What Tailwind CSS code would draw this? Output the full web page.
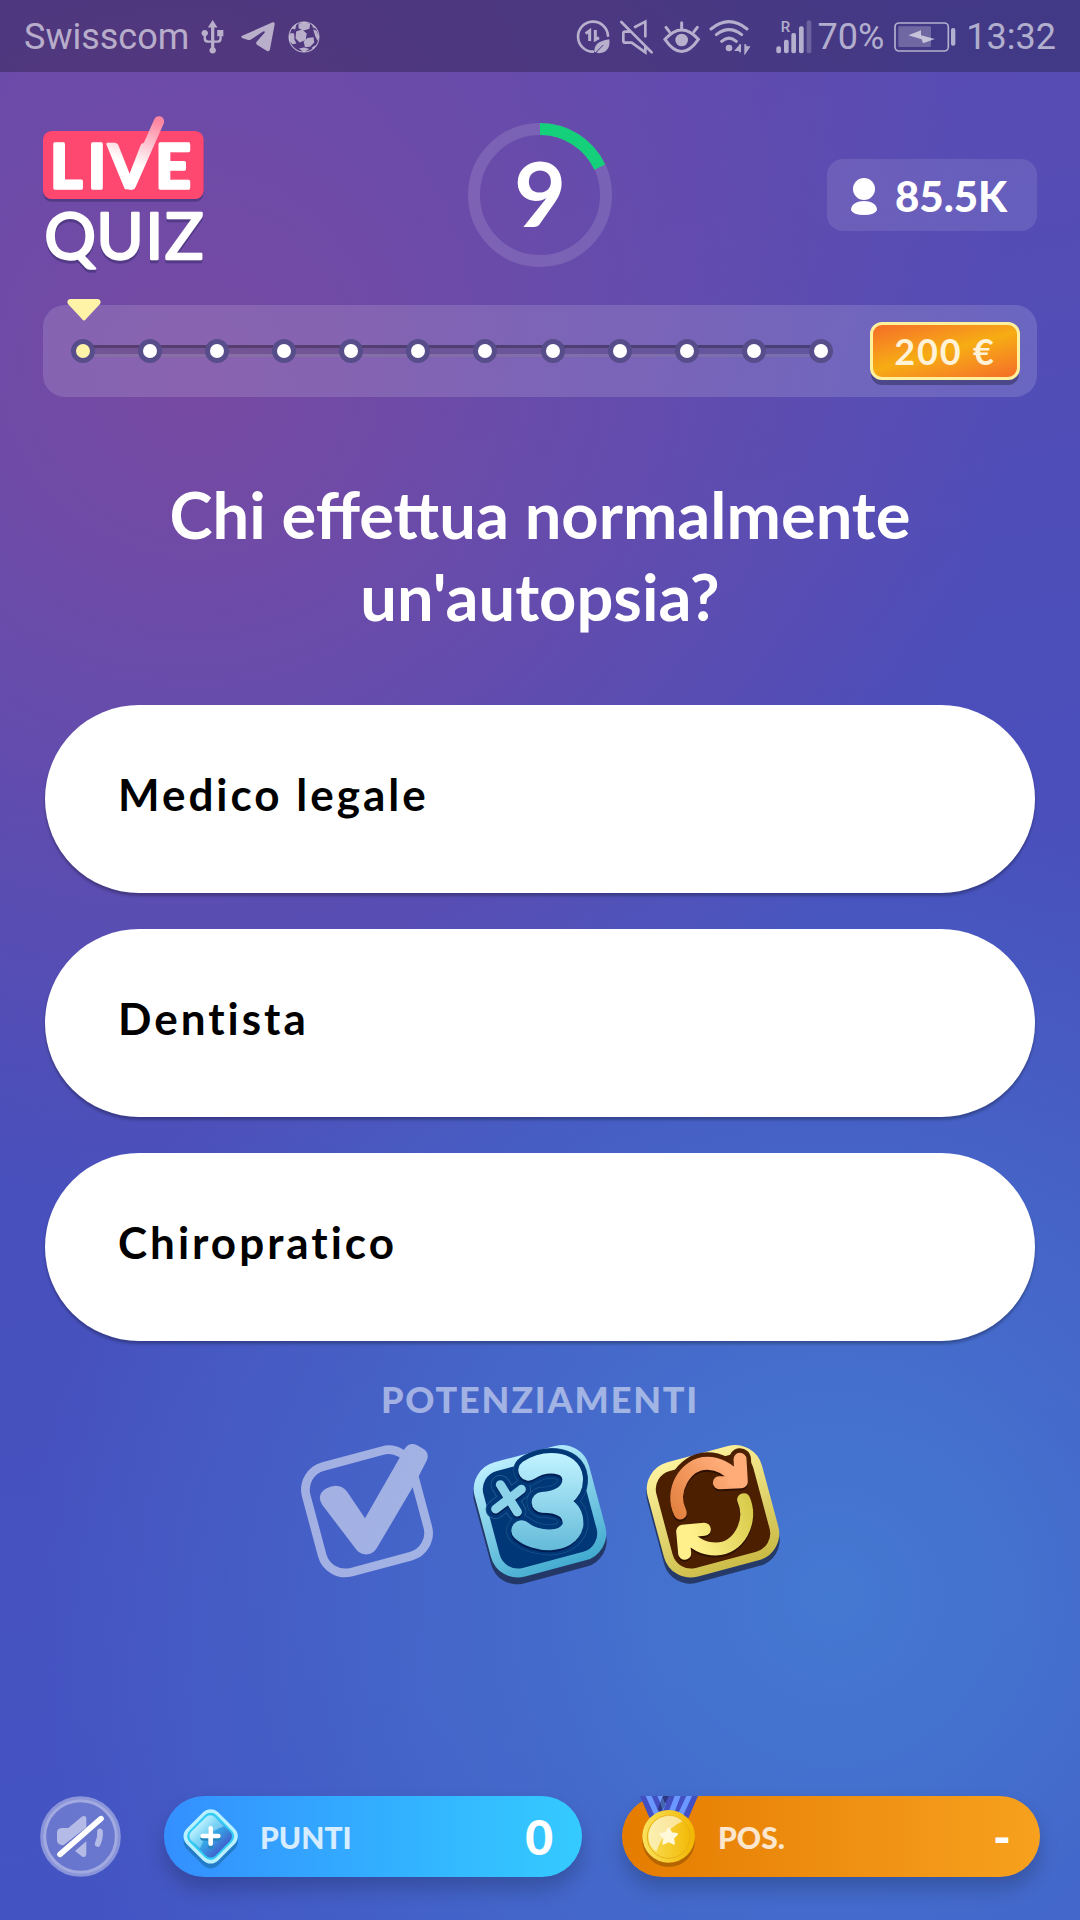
<!DOCTYPE html>
<html lang="it">
<head>
<meta charset="utf-8">
<meta name="viewport" content="width=device-width, initial-scale=1">
<title>Live Quiz</title>
<script src="https://cdn.jsdelivr.net/npm/@tailwindcss/browser@4"></script>
</head>
<body class="flex min-h-screen flex-col bg-[radial-gradient(circle_at_18%_20%,#774aa2_0,#774aa200_820px),radial-gradient(circle_at_77%_83%,#4479d2_0,#4479d200_800px),linear-gradient(170deg,#5d4bb1_0%,#4a4fbb_45%,#4255c4_100%)] font-['Lato',sans-serif] text-white">

<!-- Phone status bar -->
<div class="flex h-[72px] items-center justify-between bg-black/25 px-6 pt-0.5 font-['Roboto',sans-serif] text-4xl text-white/60">
  <div class="flex items-center gap-3">
    <span>Swisscom</span>
    <svg class="h-[34px] w-6" viewBox="606 57 72 105" fill="currentColor"><path d="M641 57 656 80H646V120H656Q662 120 662 112V107H655V88H674V107H669V114Q669 127 657 127H646V142A10 10 0 1 1 636 142V127H625Q613 127 613 114V107A10 10 0 1 1 620 107V112Q620 120 627 120H636V80H626Z"/></svg>
    <svg class="ml-1 h-[30px] w-[34px]" viewBox="725 68 102 90" fill="currentColor"><path d="M727 110 820 69Q827 67 826 75L812 150Q810 158 803 155L773 136Q768 132 772 127L797 99Q796 94 790 97L756 120Q751 124 744 121L728 116Q724 113 727 110Z"/></svg>
    <svg class="ml-px h-[32px] w-[32px]" viewBox="865 63 94 94" fill="currentColor"><circle cx="912" cy="110" r="44" fill="none" stroke="currentColor" stroke-width="3"/><path d="M889 94 906 88 920 100 917 119 899 126 887 114ZM896 72 912 65 930 72 928 86 911 91 896 84ZM868 108 873 98 883 100 884 118 890 129 878 131 869 120ZM922 113 940 111 942 126 930 139 915 140 911 124ZM939 87 949 92 956 110 952 121 945 108ZM897 144 912 141 928 145 912 155ZM876 85 890 72 886 88ZM936 74 948 86 938 82ZM934 142 947 133 940 145Z"/></svg>
  </div>
  <div class="flex items-center">
    <svg class="h-[36px] w-[176px]" viewBox="55 56 528 108" fill="none" stroke="currentColor" stroke-width="9" stroke-linecap="round">
      <path d="M151 106A45 45 0 1 0 106 154" stroke-width="8"/><path d="M84 100 96 91V122M113 89V118L124 112" stroke-linecap="butt"/><path d="M111 155Q105 125 155 117Q160 155 124 159Z" fill="currentColor" stroke="none"/><path d="M115 156 136 135" stroke="#463783" stroke-width="3"/>
      <path d="M191 65 282 156M232 80 263 64V108M216 94H202Q197 94 197 100V121Q197 127 203 127H222L263 156V140" stroke-width="8"/>
      <path d="M322 117Q372 61 422 117Q372 190 322 117ZM372 67V87M325 81 335 94M419 81 409 94"/><circle cx="372" cy="119" r="19" fill="currentColor" stroke="none"/>
      <path d="M460 86Q514 42 568 86M476 103Q514 73 552 103M492 123Q514 104 536 123"/><circle cx="514" cy="143" r="10" fill="currentColor" stroke="none"/><path d="M547 132V156M549 134 536 149H549M563 132V156L573 141H562" stroke-width="6" stroke-linecap="butt"/>
    </svg>
    <svg class="ml-6 h-9 w-9 overflow-visible" viewBox="656 53 108 108" fill="currentColor"><text x="670" y="93" font-size="45" font-weight="500" font-family="Roboto" class="text-[45px]">R</text><rect x="657" y="135" width="14" height="21" rx="6"/><rect x="680" y="115" width="14" height="41" rx="6"/><rect x="702" y="95" width="14" height="61" rx="6"/><rect x="725" y="75" width="14" height="81" rx="6"/><rect x="748" y="57" width="14" height="99" rx="6" opacity=".35"/></svg>
    <span class="ml-1.5">70%</span>
    <svg class="ml-2.5 h-[30px] w-[62px]" viewBox="1005 65 186 90" fill="currentColor"><rect x="1008" y="68" width="160" height="84" rx="12" fill="none" stroke="currentColor" stroke-width="5"/><rect x="1018" y="78" width="98" height="62" rx="4" opacity=".4"/><path d="M1086 90V105L1128 116 1092 129 1088 117 1048 105Z"/><rect x="1176" y="83" width="13" height="53" rx="6"/></svg>
    <span class="ml-2.5">13:32</span>
  </div>
</div>

<header class="flex items-center justify-between px-[43px] pt-[43px]">
  <svg class="h-[160px] w-[164px] overflow-visible" viewBox="69 45 492 480" role="img" aria-label="Live Quiz" font-family="Lato, sans-serif" fill="#fff" stroke="#fff" stroke-linejoin="round" stroke-linecap="round">
    <defs><linearGradient id="tick" gradientUnits="userSpaceOnUse" x1="355" y1="200" x2="405" y2="60"><stop stop-color="#fff"/><stop offset="1" stop-color="#ff86a0"/></linearGradient></defs>
    <rect x="69" y="102" width="482" height="203" rx="26" fill="#533a87" stroke="none"/>
    <rect x="69" y="93" width="482" height="204" rx="26" fill="#ff4870" stroke="none"/>
    <text y="264" x="90 203" font-size="186" font-weight="700" stroke-width="10">LI</text>
    <text y="264" x="264" font-size="186" font-weight="700" stroke="url(#tick)" fill="url(#tick)" stroke-width="8">V</text>
    <text y="264" x="406" font-size="186" font-weight="700" stroke-width="10">E</text>
    <path d="M333 254 417 64" stroke="url(#tick)" stroke-width="31" fill="none"/>
    <text y="485" x="73 229 376 434" font-size="194" fill="#533a87" stroke="#533a87" stroke-width="7" aria-hidden="true">QUIZ</text>
    <text y="478" x="73 229 376 434" font-size="194" stroke-width="7">QUIZ</text>
  </svg>
  <div class="relative mr-[-46px] grid size-36 place-items-center text-[90px] leading-none font-bold" role="timer">
    <svg class="absolute inset-0" viewBox="0 0 144 144" fill="none" stroke-width="12"><circle cx="72" cy="72" r="66" stroke="#fff" stroke-opacity=".13"/><path d="M72 6A66 66 0 0 1 131.800 44.100" stroke="#14d07a"/></svg>
    <span class="pb-1.5">9</span>
  </div>
  <div class="flex h-[72px] w-[210px] items-center gap-[18px] rounded-2xl bg-white/10 pt-0.5 pl-6 text-[42px] font-black">
    <svg class="h-[37px] w-[26px]" viewBox="0 0 26 37" fill="#fff"><circle cx="13" cy="11" r="11"/><path d="M0 32C0 20 26 20 26 32Q24 37 13 37T0 32Z"/></svg>
    <span>85.5K</span>
  </div>
</header>

<main class="flex flex-1 flex-col px-[43px] pt-[30px]">
  <section class="relative flex h-[92px] items-center rounded-[22px] bg-white/14 pr-[17px] pl-[28px]" aria-label="Avanzamento">
    <svg class="absolute -top-[6px] left-6 h-[22px] w-[34px]" viewBox="0 0 34 22" fill="#fff3a8"><path d="M3 0H31Q35 1 33 5L19 20Q17 23 15 20L1 5Q-1 1 3 0Z"/></svg>
    <ol class="relative flex flex-1 justify-between before:absolute before:inset-x-3 before:top-[6px] before:h-3 before:border-t-3 before:border-b-3 before:border-t-black/25 before:border-b-white/15 before:bg-black/15">
      <li class="relative size-6 rounded-full border-5 border-[#574d8b] bg-[#fff3a8]"></li>
      <li class="relative size-6 rounded-full border-5 border-[#574d8b] bg-white"></li>
      <li class="relative size-6 rounded-full border-5 border-[#574d8b] bg-white"></li>
      <li class="relative size-6 rounded-full border-5 border-[#574d8b] bg-white"></li>
      <li class="relative size-6 rounded-full border-5 border-[#574d8b] bg-white"></li>
      <li class="relative size-6 rounded-full border-5 border-[#574d8b] bg-white"></li>
      <li class="relative size-6 rounded-full border-5 border-[#574d8b] bg-white"></li>
      <li class="relative size-6 rounded-full border-5 border-[#574d8b] bg-white"></li>
      <li class="relative size-6 rounded-full border-5 border-[#574d8b] bg-white"></li>
      <li class="relative size-6 rounded-full border-5 border-[#574d8b] bg-white"></li>
      <li class="relative size-6 rounded-full border-5 border-[#574d8b] bg-white"></li>
      <li class="relative size-6 rounded-full border-5 border-[#574d8b] bg-white"></li>
    </ol>
    <div class="ml-[37px] grid h-[58px] w-[150px] place-items-center rounded-xl border-3 border-[#fff09c] bg-linear-165 from-[#f46c26] via-[#f6ac12] to-[#f46c26] text-4xl font-bold tracking-wider text-[#fff2d6] shadow-[0_6px_0_-1px_#4b4788]">200 €</div>
  </section>

  <h1 class="mt-[76px] text-center text-[65px] leading-[82px] font-bold">Chi effettua normalmente<br>un'autopsia?</h1>

  <div class="mx-0.5 mt-[68px] flex flex-col gap-9 text-[44px] font-bold tracking-[3px] text-black">
    <button class="h-[188px] rounded-full bg-white px-[73px] pb-2.5 text-left shadow-[0_3px_3px_#0004]">Medico legale</button>
    <button class="h-[188px] rounded-full bg-white px-[73px] pb-2.5 text-left shadow-[0_3px_3px_#0004]">Dentista</button>
    <button class="h-[188px] rounded-full bg-white px-[73px] pb-2.5 text-left shadow-[0_3px_3px_#0004]">Chiropratico</button>
  </div>

  <h2 class="mt-[34px] text-center text-4xl leading-12 font-black tracking-wider text-white/50">POTENZIAMENTI</h2>
  <div class="mt-[22px] flex justify-center gap-[39px]">
    <button class="h-[140px] w-[134px]" aria-label="Risposta corretta">
      <svg class="h-full w-full overflow-visible" viewBox="60 225 402 420"><g opacity=".5" fill="#fff"><rect x="97" y="260" width="328" height="328" rx="72" transform="rotate(-15 261 424)" fill="none" stroke="#fff" stroke-width="26"/><path d="M362 258 375 235Q388 216 410 225L432 238Q448 249 441 270L418 315 402 345 290 535Q278 555 254 553 238 550 230 540L127 405Q108 375 137 356 178 334 202 366L255 445Z"/></g></svg>
    </button>
    <button class="h-[140px] w-[134px]" aria-label="Più tre">
      <svg class="h-full w-full overflow-visible" viewBox="39 45 402 420" fill="none" stroke-linecap="round" stroke-linejoin="round">
        <defs><linearGradient id="ice" gradientUnits="userSpaceOnUse" x1="200" y1="50" x2="260" y2="440"><stop stop-color="#bdf0ff"/><stop offset="1" stop-color="#3fa9ce"/></linearGradient>
        <linearGradient id="num" gradientUnits="userSpaceOnUse" x1="260" y1="75" x2="260" y2="370"><stop stop-color="#c0f2ff"/><stop offset="1" stop-color="#61b9d8"/></linearGradient></defs>
        <rect x="62" y="85" width="356" height="356" rx="80" transform="rotate(-15 240 263)" fill="#243868"/>
        <rect x="76" y="80" width="328" height="328" rx="70" transform="rotate(-15 240 244)" fill="#003877" stroke="url(#ice)" stroke-width="27"/>
        <path d="M206 121C250 91 332 88 338 145C340 190 300 214 246 217C300 217 342 235 339 285C325 345 225 338 185 302" stroke="#245a91" stroke-width="92"/>
        <path d="M121 164 170 244M106 238 184 178" stroke="#2c6297" stroke-width="58"/>
        <path d="M121 164 170 244M106 238 184 178" stroke="#003877" stroke-width="54"/>
        <path d="M206 121C250 91 332 88 338 145C340 190 300 214 246 217C300 217 342 235 339 285C325 345 225 338 185 302" stroke="#003877" stroke-width="89"/>
        <path d="M206 121C250 91 332 88 338 145C340 190 300 214 246 217C300 217 342 235 339 285C325 345 225 338 185 302" transform="translate(-2 7)" stroke="#001d54" stroke-width="60"/>
        <path d="M206 121C250 91 332 88 338 145C340 190 300 214 246 217C300 217 342 235 339 285C325 345 225 338 185 302" stroke="url(#num)" stroke-width="62"/>
        <path d="M121 170 172 252M107 243 184 184" stroke="#001d54" stroke-width="26"/><path d="M121 164 172 246M107 237 184 178" stroke="#8cd3e9" stroke-width="27"/>
      </svg>
    </button>
    <button class="h-[140px] w-[134px]" aria-label="Cambia domanda">
      <svg class="h-full w-full overflow-visible" viewBox="48 45 402 420" fill="none" stroke-linecap="round" stroke-linejoin="round">
        <defs><linearGradient id="gold" gradientUnits="userSpaceOnUse" x1="200" y1="50" x2="260" y2="440"><stop stop-color="#fff4a0"/><stop offset="1" stop-color="#c9b944"/></linearGradient>
        <linearGradient id="org" gradientUnits="userSpaceOnUse" x1="130" y1="250" x2="290" y2="120"><stop stop-color="#e3803e"/><stop offset="1" stop-color="#ffac79"/></linearGradient>
        <linearGradient id="yel" gradientUnits="userSpaceOnUse" x1="180" y1="300" x2="360" y2="230"><stop stop-color="#fff08c"/><stop offset="1" stop-color="#d9cc4c"/></linearGradient></defs>
        <rect x="71" y="83" width="356" height="356" rx="80" transform="rotate(-15 249 261)" fill="#263a69"/>
        <rect x="85" y="80" width="328" height="328" rx="70" transform="rotate(-15 249 244)" fill="#4b1f00" stroke="url(#gold)" stroke-width="27"/>
        <path d="M151 249C118 185 165 100 232 100C275 100 308 130 325 150M330 88 334 155 268 158" stroke="#4b1f00" stroke-width="66"/>
        <g transform="translate(0 6)" stroke="#2d1000" stroke-width="39"><path d="M151 249C118 185 165 100 232 100C275 100 308 130 325 150M330 88 334 155 268 158"/><path d="M341 209C370 275 325 357 258 357C215 357 185 335 164 305M223 298 158 304 164 370"/></g>
        <path d="M151 249C118 185 165 100 232 100C275 100 308 130 325 150M330 88 334 155 268 158" stroke="url(#org)" stroke-width="39"/>
        <path d="M320 125 330 150 305 155" stroke="#ffac79" stroke-width="28"/>
        <path d="M341 209C370 275 325 357 258 357C215 357 185 335 164 305M223 298 158 304 164 370" stroke="url(#yel)" stroke-width="39"/>
      </svg>
    </button>
  </div>
</main>

<footer class="flex items-center gap-10 px-10 pt-8 pb-[43px]">
  <button class="mr-[3px] size-[81px] shrink-0" aria-label="Audio disattivato">
    <svg class="h-full w-full" viewBox="60 78 243 243" fill="#fff"><circle cx="181.500" cy="199.500" r="112" fill-opacity=".2" stroke="#fff" stroke-opacity=".38" stroke-width="18"/><g opacity=".5"><path d="M125 174H145L185 140Q199 134 199 148V172L130 226Q111 224 111 211V188Q111 175 125 174ZM199 214V252Q198 263 187 260L165 243Z"/><path d="M240 184Q242 202 233 222" fill="none" stroke="#fff" stroke-width="17" stroke-linecap="round"/></g><path d="M120 253 243 146" stroke="#fff" stroke-width="17" stroke-linecap="round"/></svg>
  </button>
  <div class="flex h-[81px] flex-1 items-center rounded-full bg-linear-to-r from-[#348fff] to-[#35cbff] pr-[29px] pl-[18px] shadow-[0_12px_20px_#0003]">
    <svg class="mt-1 h-[64px] w-[58px] overflow-visible" viewBox="485 111 174 192"><defs><linearGradient id="gem" x1="0" y1="0" x2="1" y2="0"><stop stop-color="#98e7ff"/><stop offset=".35" stop-color="#32bdf0"/><stop offset="1" stop-color="#4164cd"/></linearGradient></defs>
      <rect x="504" y="147" width="134" height="134" rx="32" transform="rotate(45 571 214)" fill="#247bc9"/><rect x="504" y="132" width="134" height="134" rx="32" transform="rotate(45 571 199)" fill="#b9f1ff"/><rect x="514" y="142" width="114" height="114" rx="24" transform="rotate(45 571 199)" fill="#31ccf6"/><rect x="520" y="148" width="102" height="102" rx="20" transform="rotate(45 571 199)" fill="url(#gem)"/><path d="M513 187 557 143Q571 131 585 143L611 169Q555 187 539 235L513 211Q503 199 513 187Z" fill="#fff" opacity=".35"/><path d="M571 180V230M547 205H595" stroke="#2586bc" stroke-width="14" stroke-linecap="round"/><path d="M571 175V221M547 198H594" stroke="#fff" stroke-width="14" stroke-linecap="round"/></svg>
    <span class="mt-0.5 ml-5 text-[30px] font-black text-white/80">PUNTI</span>
    <span class="ml-auto text-5xl font-black">0</span>
  </div>
  <div class="flex h-[81px] flex-1 items-center rounded-full bg-linear-to-r from-[#e57c00] to-[#f7a11e] pr-[29px] pl-[18px] shadow-[0_12px_20px_#0003]">
    <svg class="h-[81px] w-[58px] overflow-visible" viewBox="119 78 174 243"><defs><linearGradient id="coin"><stop stop-color="#f9e25c"/><stop offset="1" stop-color="#f3b600"/></linearGradient></defs>
      <path d="M119 78H206L186 145H148Z" fill="#4350c2"/><path d="M136 78H154L181 140H164ZM171 78H188L200 110 192 125Z" fill="#6a98ff"/><path d="M206 78H293L264 145H180Z" fill="#4350c2"/><path d="M223 78H241L218 138H200ZM258 78H275L248 138H230Z" fill="#6a98ff"/><path d="M188 78H206L181 125 172 118Z" fill="#2c3681"/><path d="M180 98 187 82 196 105 186 120Z" fill="#4467b0"/>
      <circle cx="205" cy="212" r="79" fill="#b56500"/><circle cx="205" cy="199" r="79" fill="url(#coin)"/><circle cx="205" cy="201" r="64" fill="none" stroke="#e8b116" stroke-width="3"/><path d="M145 205C140 150 205 115 247 154Q190 180 168 245Q145 230 145 205Z" fill="#fff" opacity=".55"/><path d="M205 175 213 190 230 192 218 205 221 221 205 213 189 221 192 205 180 192 197 190Z" fill="#fff8da" stroke="#fff8da" stroke-width="6" stroke-linejoin="round"/></svg>
    <span class="mt-0.5 ml-5 text-[30px] font-black text-white/80">POS.</span>
    <span class="ml-auto text-5xl font-black">-</span>
  </div>
</footer>
</body>
</html>
